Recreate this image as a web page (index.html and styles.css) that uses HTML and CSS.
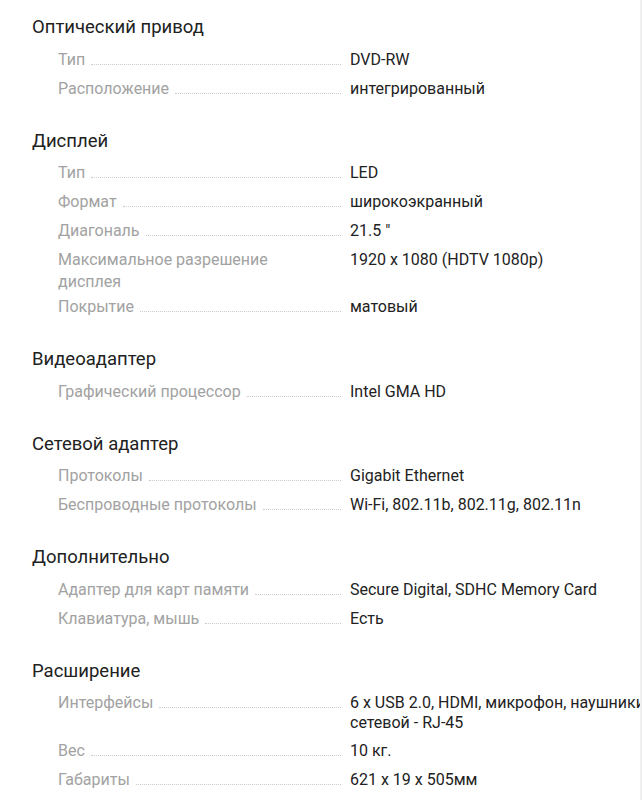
FILE: index.html
```html
<!DOCTYPE html>
<html lang="ru">
<head>
<meta charset="utf-8">
<link rel="stylesheet" href="styles.css">
</head>
<body>
<div class="page">
  <section class="group">
    <h2 class="group-title">Оптический привод</h2>
    <div class="row"><div class="label"><span class="name">Тип</span><span class="dots"></span></div><div class="value">DVD-RW</div></div>
    <div class="row"><div class="label"><span class="name">Расположение</span><span class="dots"></span></div><div class="value">интегрированный</div></div>
  </section>
  <section class="group">
    <h2 class="group-title">Дисплей</h2>
    <div class="row"><div class="label"><span class="name">Тип</span><span class="dots"></span></div><div class="value">LED</div></div>
    <div class="row"><div class="label"><span class="name">Формат</span><span class="dots"></span></div><div class="value">широкоэкранный</div></div>
    <div class="row"><div class="label"><span class="name">Диагональ</span><span class="dots"></span></div><div class="value">21.5 "</div></div>
    <div class="row"><div class="label"><span class="name wrap">Максимальное разрешение дисплея</span></div><div class="value">1920 x 1080 (HDTV 1080p)</div></div>
    <div class="row"><div class="label"><span class="name">Покрытие</span><span class="dots"></span></div><div class="value">матовый</div></div>
  </section>
  <section class="group">
    <h2 class="group-title">Видеоадаптер</h2>
    <div class="row"><div class="label"><span class="name">Графический процессор</span><span class="dots"></span></div><div class="value">Intel GMA HD</div></div>
  </section>
  <section class="group">
    <h2 class="group-title">Сетевой адаптер</h2>
    <div class="row"><div class="label"><span class="name">Протоколы</span><span class="dots"></span></div><div class="value">Gigabit Ethernet</div></div>
    <div class="row"><div class="label"><span class="name">Беспроводные протоколы</span><span class="dots"></span></div><div class="value">Wi-Fi, 802.11b, 802.11g, 802.11n</div></div>
  </section>
  <section class="group">
    <h2 class="group-title">Дополнительно</h2>
    <div class="row"><div class="label"><span class="name">Адаптер для карт памяти</span><span class="dots"></span></div><div class="value">Secure Digital, SDHC Memory Card</div></div>
    <div class="row"><div class="label"><span class="name">Клавиатура, мышь</span><span class="dots"></span></div><div class="value">Есть</div></div>
  </section>
  <section class="group">
    <h2 class="group-title">Расширение</h2>
    <div class="row"><div class="label"><span class="name">Интерфейсы</span><span class="dots"></span></div><div class="value">6 x USB 2.0, HDMI, микрофон, наушники, сетевой - RJ-45</div></div>
    <div class="row"><div class="label"><span class="name">Вес</span><span class="dots"></span></div><div class="value">10 кг.</div></div>
    <div class="row"><div class="label"><span class="name">Габариты</span><span class="dots"></span></div><div class="value">621 x 19 x 505мм</div></div>
  </section>
</div>
</body>
</html>
```
FILE: styles.css
```css
html, body {
  margin: 0;
  padding: 0;
  background: #ffffff;
}
body {
  font-family: Roboto, "Noto Sans", sans-serif;
  color: #222222;
}
.page {
  width: 642px;
  height: 800px;
  border-right: 2px solid #efefef;
  overflow: hidden;
  padding-top: 14px;
  box-sizing: border-box;
}
.group {
  margin-bottom: 24.5px;
}
.group-title {
  margin: 0 0 5px 32px;
  font-size: 18.5px;
  font-weight: 400;
  line-height: 26px;
  color: #212121;
}
.row {
  display: grid;
  grid-template-columns: 283px 320px;
  column-gap: 9px;
  padding: 3.5px 0 3.5px 58px;
  align-items: baseline;
}
.label {
  display: flex;
  align-items: baseline;
  font-size: 16px;
  line-height: 22px;
  color: #a2a2a2;
}
.name {
  flex: none;
}
.name.wrap {
  flex: 1;
  padding-right: 60px;
  margin-bottom: -4px;
}
.dots {
  flex: 1;
  margin-left: 6px;
  border-bottom: 1px dotted #cccccc;
}
.value {
  font-size: 16px;
  line-height: 20px;
  color: #222222;
}
```
